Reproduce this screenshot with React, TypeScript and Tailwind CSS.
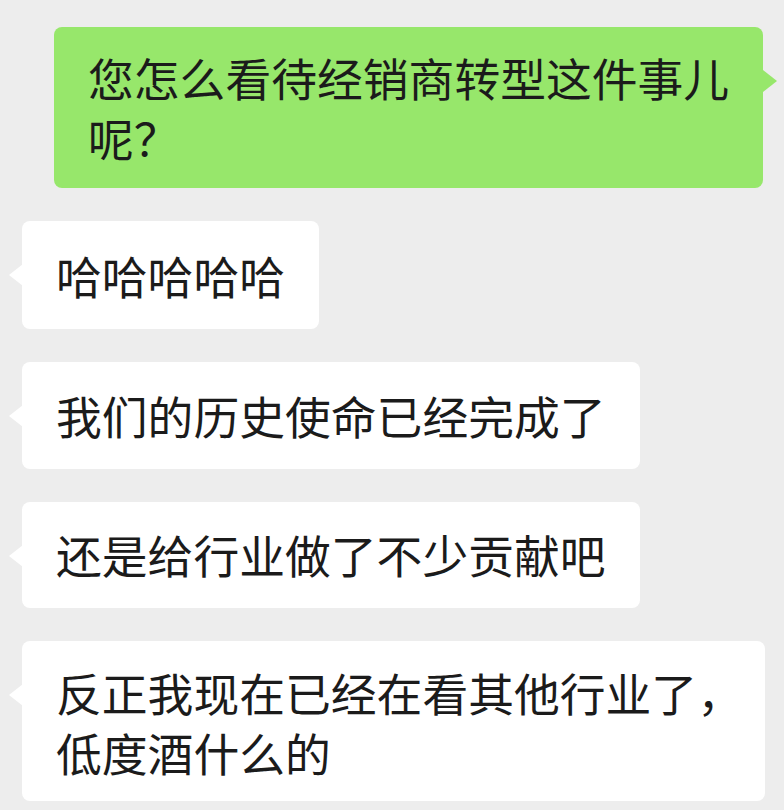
const font = {
  fontFamily: '"Noto Sans CJK SC", "Noto Sans", sans-serif',
};

function Incoming({ children, className = "" }: { children: React.ReactNode; className?: string }) {
  return (
    <div className="relative self-start">
      <span className="absolute left-[-13px] top-[43px] h-0 w-0 border-y-[11px] border-r-[14px] border-y-transparent border-r-white" />
      <div
        className={`rounded-[8px] bg-white pl-[34px] text-[45.8px] leading-[60px] whitespace-nowrap text-[#1b1b1b] ${className}`}
      >
        {children}
      </div>
    </div>
  );
}

export default function App() {
  return (
    <div className="flex h-[810px] w-[784px] flex-col gap-[33px] overflow-hidden bg-[#ededed] pt-[27px] pl-[22px] pr-[21px]" style={font}>
      <div className="relative self-end">
        <div className="w-[709px] rounded-[8px] bg-[#97e76b] px-[34px] pt-[20px] pb-[21px] text-[45.8px] leading-[60px] whitespace-nowrap text-[#1b1b1b]">
          您怎么看待经销商转型这件事儿
          <br />
          呢？
        </div>
        <span className="absolute right-[-14px] top-[43px] h-0 w-0 border-y-[11px] border-l-[14px] border-y-transparent border-l-[#97e76b]" />
      </div>

      <Incoming className="pr-[34px] pt-[24px] pb-[24px]">哈哈哈哈哈</Incoming>
      <Incoming className="pr-[34px] pt-[23px] pb-[24px]">我们的历史使命已经完成了</Incoming>
      <Incoming className="pr-[34px] pt-[22px] pb-[24px]">还是给行业做了不少贡献吧</Incoming>
      <Incoming className="w-[743px] pr-[22px] pt-[21px] pb-[19px]">
        反正我现在已经在看其他行业了，
        <br />
        低度酒什么的
      </Incoming>
    </div>
  );
}
